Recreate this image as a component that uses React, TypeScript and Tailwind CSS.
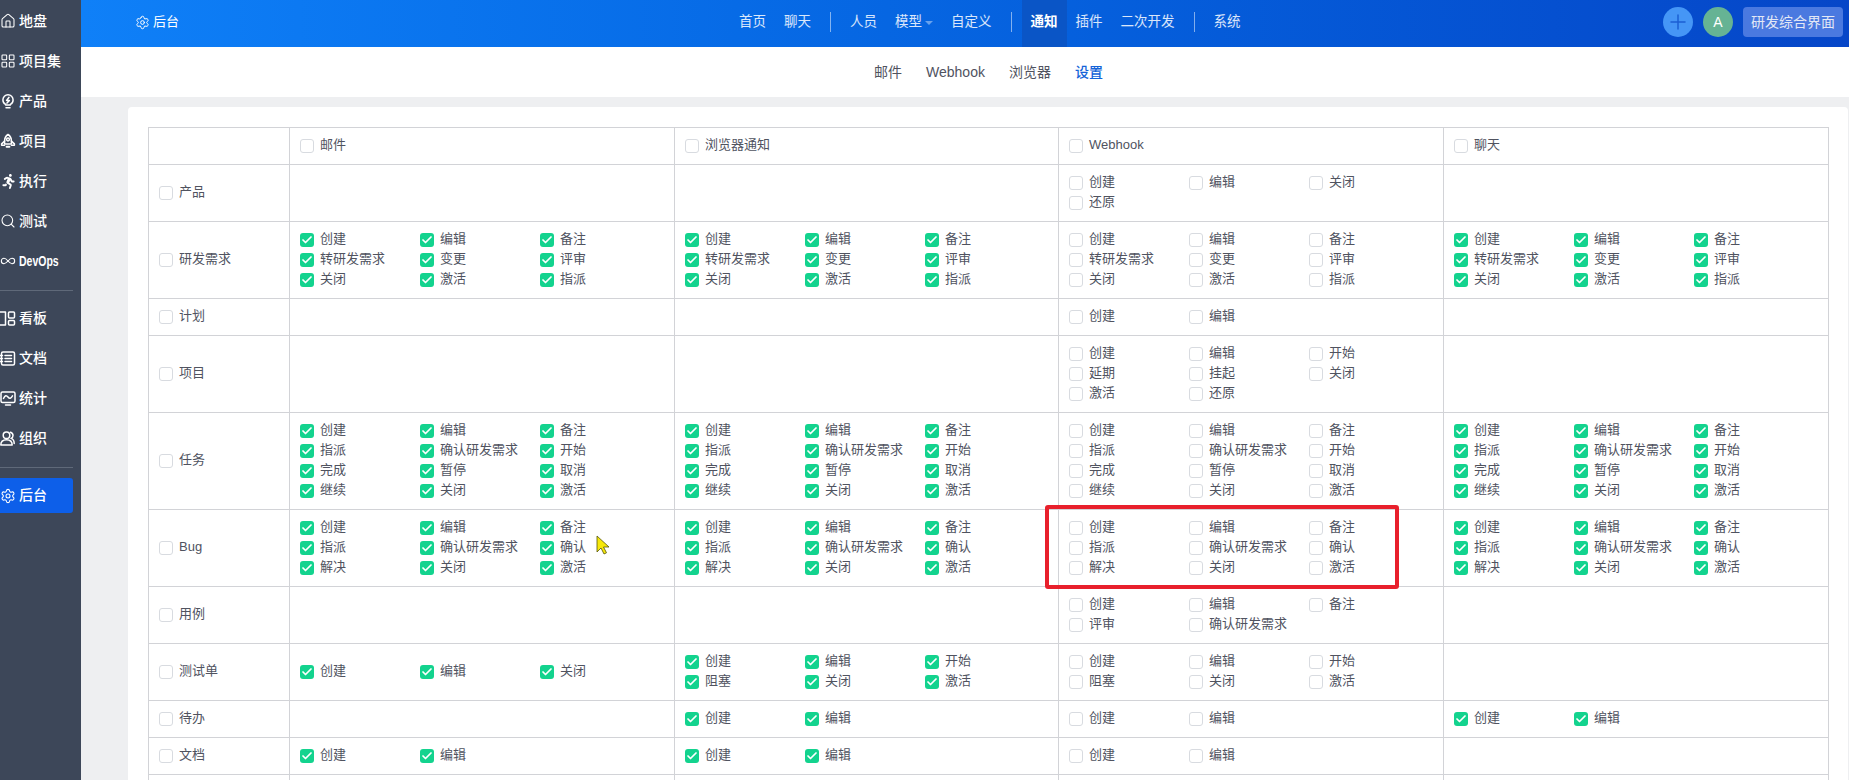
import { Check, Home, Infinity as InfinityIcon, LayoutGrid, Plus, Search, Settings } from "lucide-react";
import { FaRunning } from "react-icons/fa";
import type { ReactNode } from "react";

const iconProps = {
  width: 17,
  height: 17,
  viewBox: "0 0 16 16",
  fill: "none",
  stroke: "currentColor",
  strokeWidth: 1.5,
  strokeLinecap: "round" as const,
  strokeLinejoin: "round" as const,
};

const BulbIcon = () => (
  <svg {...iconProps}>
    <path d="M5.6 11.6V10.8C3.9 9.9 2.9 8.4 2.9 6.4a5.1 5.1 0 0 1 10.2 0c0 2-1 3.5-2.7 4.4v.8z" />
    <path d="M6 14.2h4" />
    <path d="M9 3.8 6.6 7h2.8L7 9.6" />
  </svg>
);

const RocketIcon = () => (
  <svg {...iconProps}>
    <path d="M8 1c2.3 1.5 3.4 3.6 3.4 6.2v3.4H4.6V7.2C4.6 4.6 5.7 2.5 8 1z" />
    <circle cx="8" cy="6" r="1.4" />
    <path d="M4.6 7.6 1.6 10.4v1.4h3M11.4 7.6l3 2.8v1.4h-3" />
    <path d="M6.6 13.2h2.8" strokeWidth={2} />
  </svg>
);

const BoardIcon = () => (
  <svg {...iconProps}>
    <path d="M-1 1.500h6.500v13H-1" />
    <rect x="8.500" y="1.500" width="6" height="6" rx="1" />
    <rect x="8.500" y="10" width="6" height="4.500" rx="1" />
  </svg>
);

const DocIcon = () => (
  <svg {...iconProps}>
    <rect x="1.500" y="1.500" width="13" height="13" rx="1.500" />
    <path d="M5 5h6.500M5 8h6.500M5 11h6.500M0 5h2.500M0 8h2.500M0 11h2.500" />
  </svg>
);

const ChartIcon = () => (
  <svg {...iconProps}>
    <rect x="1" y="1.500" width="14" height="10.500" rx="1.500" />
    <path d="M3.500 8c1.500-3.500 3-3.500 4.500-1.500s3 1.500 4.500-1.200M5.500 14.500h5" />
  </svg>
);

const TeamIcon = () => (
  <svg {...iconProps}>
    <circle cx="6.500" cy="4.800" r="3.300" />
    <path d="M.8 14.600c0-3.400 2.400-5.400 5.700-5.400s5.700 2 5.700 5.400zM10.400 1.800c1.700.5 2.600 1.700 2.600 3.100s-.8 2.500-2 3c2 .7 3.200 2.500 3.200 5" />
  </svg>
);

type NavIcon = { label: string; icon: ReactNode; narrow?: boolean };

const lucide = { size: 18, strokeWidth: 1.6 };

const topNav: NavIcon[] = [
  { label: "地盘", icon: <Home {...lucide} /> },
  { label: "项目集", icon: <LayoutGrid {...lucide} /> },
  { label: "产品", icon: <BulbIcon /> },
  { label: "项目", icon: <RocketIcon /> },
  { label: "执行", icon: <FaRunning size={15} /> },
  { label: "测试", icon: <Search {...lucide} /> },
  { label: "DevOps", icon: <InfinityIcon {...lucide} />, narrow: true },
];

const bottomNav: NavIcon[] = [
  { label: "看板", icon: <BoardIcon /> },
  { label: "文档", icon: <DocIcon /> },
  { label: "统计", icon: <ChartIcon /> },
  { label: "组织", icon: <TeamIcon /> },
];

const story = ["创建", "编辑", "备注", "转研发需求", "变更", "评审", "关闭", "激活", "指派"];
const task = ["创建", "编辑", "备注", "指派", "确认研发需求", "开始", "完成", "暂停", "取消", "继续", "关闭", "激活"];
const bug = ["创建", "编辑", "备注", "指派", "确认研发需求", "确认", "解决", "关闭", "激活"];
const testtask = ["创建", "编辑", "开始", "阻塞", "关闭", "激活"];
const basic = ["创建", "编辑"];

type Cell = { items: string[]; checked?: boolean };
const none: Cell = { items: [] };
const on = (items: string[]): Cell => ({ items, checked: true });
const off = (items: string[]): Cell => ({ items });

const rows: { name: string; cells: Cell[] }[] = [
  { name: "产品", cells: [none, none, off(["创建", "编辑", "关闭", "还原"]), none] },
  { name: "研发需求", cells: [on(story), on(story), off(story), on(story)] },
  { name: "计划", cells: [none, none, off(basic), none] },
  { name: "项目", cells: [none, none, off(["创建", "编辑", "开始", "延期", "挂起", "关闭", "激活", "还原"]), none] },
  { name: "任务", cells: [on(task), on(task), off(task), on(task)] },
  { name: "Bug", cells: [on(bug), on(bug), off(bug), on(bug)] },
  { name: "用例", cells: [none, none, off(["创建", "编辑", "备注", "评审", "确认研发需求"]), none] },
  { name: "测试单", cells: [on(["创建", "编辑", "关闭"]), on(testtask), off(testtask), none] },
  { name: "待办", cells: [none, on(basic), off(basic), on(basic)] },
  { name: "文档", cells: [on(basic), on(basic), off(basic), none] },
];

function Box({ checked }: { checked?: boolean }) {
  if (checked) {
    return (
      <span className="flex h-[14px] w-[14px] shrink-0 items-center justify-center rounded-[3px] bg-[#13d38e] text-white">
        <Check size={12} strokeWidth={3.5} />
      </span>
    );
  }
  return <span className="h-[14px] w-[14px] shrink-0 rounded-[3px] border border-[#d8dbe0] bg-white" />;
}

function Option({ label, checked }: { label: string; checked?: boolean }) {
  return (
    <label className="flex h-5 items-center gap-[6px] whitespace-nowrap">
      <Box checked={checked} />
      <span className="pb-[2px]">{label}</span>
    </label>
  );
}

function SideItem({ item }: { item: NavIcon }) {
  return (
    <div className="flex h-10 items-center gap-[3px] text-[14px] font-medium text-white">
      <span className="flex w-4 shrink-0 justify-center">{item.icon}</span>
      {item.narrow ? (
        <span className="origin-left scale-x-[0.7] text-[15px] font-bold">{item.label}</span>
      ) : (
        <span>{item.label}</span>
      )}
    </div>
  );
}

function TopLink({ children, active }: { children: ReactNode; active?: boolean }) {
  return (
    <a
      className={
        active
          ? "flex h-full items-center bg-[#0a55c6] px-[9px] pb-[3px] font-bold text-white"
          : "flex h-full items-center px-[9px] pb-[3px] text-white/85"
      }
    >
      {children}
    </a>
  );
}

const Sep = () => <span className="mx-[10px] mb-[3px] h-5 w-px bg-white/50" />;

export default function App() {
  return (
    <div className="relative flex h-screen w-full overflow-hidden bg-[#eeeff1] font-['Liberation_Sans','Noto_Sans_CJK_SC',sans-serif] text-[13px] text-[#50535f]">
      {/* sidebar */}
      <aside className="w-[81px] shrink-0 bg-[#3d4759] pt-px">
        {topNav.map((item) => (
          <SideItem key={item.label} item={item} />
        ))}
        <div className="mt-[9px] h-px w-[73px] bg-[#5f6979]" />
        <div className="pt-[7px]">
          {bottomNav.map((item) => (
            <SideItem key={item.label} item={item} />
          ))}
        </div>
        <div className="mt-[9px] h-px w-[73px] bg-[#5f6979]" />
        <div className="mt-[10px] flex h-[35px] w-[73px] items-center gap-[3px] rounded-r-[3px] bg-[#0d5fe9] text-[14px] font-medium text-white">
          <span className="flex w-4 shrink-0 justify-center">
            <Settings {...lucide} />
          </span>
          <span>后台</span>
        </div>
      </aside>

      <div className="flex min-w-0 flex-1 flex-col">
        {/* top bar */}
        <header className="flex h-[47px] shrink-0 items-center bg-linear-to-r from-[#0f80f8] to-[#0646c8] text-[13.5px] text-white">
          <div className="mb-[3px] flex w-[649px] shrink-0 items-center gap-[3px] pl-[54px] text-[13px]">
            <Settings size={15} strokeWidth={1.6} />
            <span>后台</span>
          </div>
          <nav className="flex h-full items-center">
            <TopLink>首页</TopLink>
            <TopLink>聊天</TopLink>
            <Sep />
            <TopLink>人员</TopLink>
            <TopLink>
              模型
              <span className="ml-[3px] mt-[2px] h-0 w-0 border-x-[4px] border-t-[4px] border-x-transparent border-t-white/40" />
            </TopLink>
            <TopLink>自定义</TopLink>
            <Sep />
            <TopLink active>通知</TopLink>
            <TopLink>插件</TopLink>
            <TopLink>二次开发</TopLink>
            <Sep />
            <TopLink>系统</TopLink>
          </nav>
          <div className="mb-[3px] ml-auto flex items-center gap-[10px] pr-[6px]">
            <span className="flex h-[30px] w-[30px] items-center justify-center rounded-full bg-[#4596f6] text-[#1b5fd3]">
              <Plus size={24} strokeWidth={1.5} />
            </span>
            <span className="flex h-[30px] w-[30px] items-center justify-center rounded-full bg-[#66b394] text-[14px] font-medium">
              A
            </span>
            <span className="flex h-[30px] w-[100px] items-center justify-center rounded-[4px] bg-[#4a79e0] text-[14px] text-[#e3e8f5]">
              研发综合界面
            </span>
          </div>
        </header>

        {/* sub nav */}
        <div className="flex h-[50px] shrink-0 items-center justify-center gap-6 bg-white pl-[47px] text-[14px] text-[#50535f]">
          <span>邮件</span>
          <span>Webhook</span>
          <span>浏览器</span>
          <span className="font-medium text-[#1463d8]">设置</span>
        </div>

        {/* settings table */}
        <main className="min-h-0 flex-1 pl-[47px] pr-px pt-[10px]">
          <div className="rounded-[4px] bg-white p-5">
            <table className="w-[1680px] table-fixed border-collapse">
              <colgroup>
                <col className="w-[141px]" />
                <col className="w-[385px]" />
                <col className="w-[384px]" />
                <col className="w-[385px]" />
                <col className="w-[385px]" />
              </colgroup>
              <thead>
                <tr>
                  <th className="border border-[#d2d3d7]" />
                  {["邮件", "浏览器通知", "Webhook", "聊天"].map((name) => (
                    <th key={name} className="border border-[#d2d3d7] px-[10px] py-2 text-left font-normal">
                      <Option label={name} />
                    </th>
                  ))}
                </tr>
              </thead>
              <tbody>
                {rows.map((row) => (
                  <tr key={row.name}>
                    <td className="border border-[#d2d3d7] px-[10px] py-2 align-middle">
                      <Option label={row.name} />
                    </td>
                    {row.cells.map((cell, i) => (
                      <td key={i} className="border border-[#d2d3d7] px-[10px] py-2 align-middle">
                        {cell.items.length > 0 && (
                          <div className="grid grid-cols-[120px_120px_120px]">
                            {cell.items.map((label, j) => (
                              <Option key={j} label={label} checked={cell.checked} />
                            ))}
                          </div>
                        )}
                      </td>
                    ))}
                  </tr>
                ))}
                <tr className="h-[37px]">
                  {[0, 1, 2, 3, 4].map((i) => (
                    <td key={i} className="border border-[#d2d3d7]" />
                  ))}
                </tr>
              </tbody>
            </table>
          </div>
        </main>
      </div>

      {/* red highlight drawn over the screenshot */}
      <div className="absolute left-[1045px] top-[505px] h-[84px] w-[354px] rounded-[3px] border-[4px] border-[#e8202c]" />

      {/* mouse pointer */}
      <svg className="absolute left-[596px] top-[535px]" width="14" height="20" viewBox="0 0 14 20">
        <path d="M1 1v16l4-4 3 6 2.500-1.200-3-5.800h5.500z" fill="#f7e80a" stroke="#55550a" strokeWidth="0.8" />
      </svg>
    </div>
  );
}
